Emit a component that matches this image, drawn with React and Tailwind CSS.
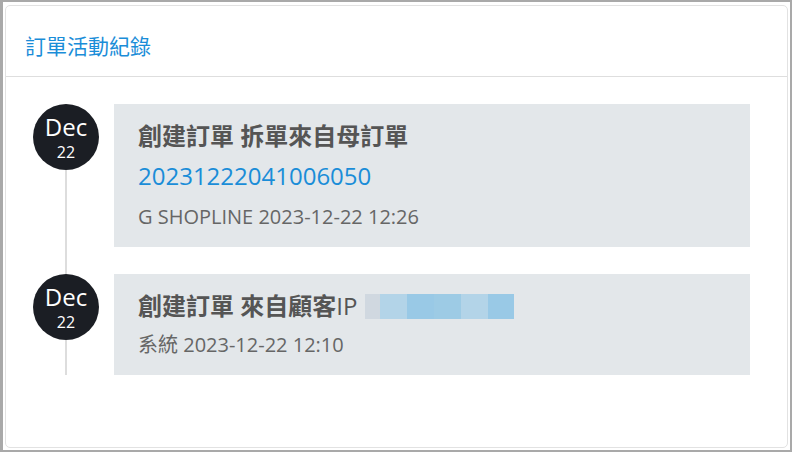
import React from 'react';

const font = { fontFamily: '"Open Sans", "Noto Sans CJK TC", sans-serif' };

const events = [
  {
    id: 1,
    month: 'Dec',
    day: '22',
    title: '創建訂單 拆單來自母訂單',
    link: '20231222041006050',
    meta: 'G SHOPLINE 2023-12-22 12:26',
  },
  {
    id: 2,
    month: 'Dec',
    day: '22',
    title: '創建訂單 來自顧客',
    suffix: 'IP',
    masked: true,
    meta: '系統 2023-12-22 12:10',
  },
];

// blurred IP address blocks
const ipBlocks = [
  'w-[15px] bg-[#d0d8e0]',
  'w-[27px] bg-[#b3d4e8]',
  'w-[27px] bg-[#99c9e6]',
  'w-[27px] bg-[#9dcbe5]',
  'w-[27px] bg-[#b3d4e8]',
  'w-[26px] bg-[#99c9e6]',
];

function TimelineItem({ item, last }) {
  return (
    <div className="flex items-stretch">
      <div className="w-[66px] shrink-0 flex flex-col items-center">
        <div className="w-[66px] h-[66px] rounded-full bg-[#1b1e24] text-white text-center pt-[12px] text-[24px] leading-[22px]">
          {item.month}
          <br />
          <span className="text-[16px]">{item.day}</span>
        </div>
        <div className="w-[2px] flex-1 bg-[#dddddd]" />
      </div>
      <div className={`flex-1 ml-[15px] ${last ? '' : 'pb-[27px]'}`}>
        <div className="bg-[#e3e7ea] pl-[24px] pr-4 pt-[14px] pb-[11px]">
          <div className="flex items-center text-[24px] leading-[36px] font-semibold text-[#555555]">
            <span>{item.title}</span>
            {item.suffix && <span className="font-normal">{item.suffix}</span>}
            {item.masked && (
              <span className="flex h-[25px] ml-[8px]">
                {ipBlocks.map((c, i) => (
                  <span key={i} className={`h-[25px] ${c}`} />
                ))}
              </span>
            )}
          </div>
          {item.link && (
            <div className="text-[24px] leading-[40px] mt-[2px] text-[#1a8dd8]">{item.link}</div>
          )}
          <div className="text-[20px] leading-[38px] mt-[2px] text-[#666666]">{item.meta}</div>
        </div>
      </div>
    </div>
  );
}

export default function App() {
  return (
    <div className="w-[792px] h-[452px] bg-[#a9a9a9] pl-[3px] pt-[2px] pr-[2px] pb-[2px]" style={font}>
      <div className="h-full bg-white pt-[3px] px-[2px] pb-[2px]">
        <div className="h-full border border-[#e2e2e2] rounded-[5px] flex flex-col">
          <div className="pl-[19px] pt-[25px] pb-[15px] border-b border-[#dedede]">
            <div className="text-[21px] leading-[30px] text-[#1a8dd8]">訂單活動紀錄</div>
          </div>
          <div className="flex-1 pl-[27px] pr-[37px] pt-[27px]">
            {events.map((item, i) => (
              <TimelineItem key={item.id} item={item} last={i === events.length - 1} />
            ))}
          </div>
        </div>
      </div>
    </div>
  );
}
